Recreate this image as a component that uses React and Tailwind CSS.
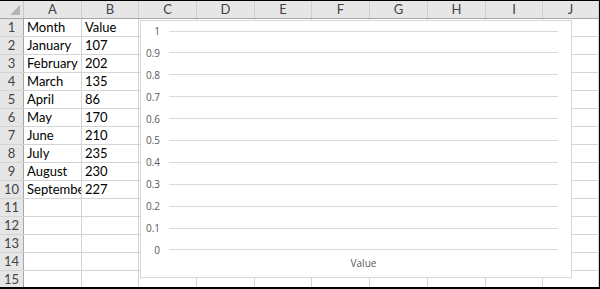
import React from 'react'

const cols = [
  { name: 'A', w: 'w-[58px]' },
  { name: 'B', w: 'w-[57px]' },
  { name: 'C', w: 'w-[58px]' },
  { name: 'D', w: 'w-[58px]' },
  { name: 'E', w: 'w-[57px]' },
  { name: 'F', w: 'w-[58px]' },
  { name: 'G', w: 'w-[58px]' },
  { name: 'H', w: 'w-[58px]' },
  { name: 'I', w: 'w-[57px]' },
  { name: 'J', w: 'flex-1' },
]

const data = [
  ['Month', 'Value'],
  ['January', '107'],
  ['February', '202'],
  ['March', '135'],
  ['April', '86'],
  ['May', '170'],
  ['June', '210'],
  ['July', '235'],
  ['August', '230'],
  ['September', '227'],
]

const ticks = ['1', '0.9', '0.8', '0.7', '0.6', '0.5', '0.4', '0.3', '0.2', '0.1', '0']

function Chart() {
  return (
    <div className="absolute left-[140px] top-[19px] w-[432px] h-[258px] bg-white border border-[#d9d9d9] font-['Open_Sans',sans-serif] text-[#595959]">
      <div className="mt-[4px] h-[231px] flex flex-col justify-between pr-[13px]">
        {ticks.map((t) => (
          <div key={t} className="flex items-center h-[12px]">
            <span className="w-[19px] text-right text-[10px] leading-[12px]">{t}</span>
            <div className="ml-[9px] flex-1 h-px bg-[#d9d9d9]" />
          </div>
        ))}
      </div>
      <div className="mt-[1px] pl-[28px] pr-[13px] text-center text-[10px] leading-[12px]">Value</div>
    </div>
  )
}

export default function App() {
  return (
    <div className="relative w-[600px] h-[289px] overflow-hidden bg-white border-t border-r border-b-2 border-black font-['Lato',sans-serif] text-[13px]">
      <div className="flex h-[18px] bg-[#e6e6e6] border-b border-[#a6a6a6] text-[#444]">
        <div className="w-[24px] shrink-0 border-r border-[#c6c6c6] relative">
          <svg className="absolute right-[3px] bottom-[3px]" width="10" height="10" viewBox="0 0 10 10">
            <polygon points="10,0 10,10 0,10" fill="#b4b4b4" />
          </svg>
        </div>
        {cols.map((c) => (
          <div key={c.name} className={`${c.w} shrink-0 border-r border-[#cfcfcf] flex items-center justify-center leading-none`}>
            {c.name}
          </div>
        ))}
      </div>
      {Array.from({ length: 15 }, (_, r) => (
        <div key={r} className="flex h-[18px] border-b border-[#d4d4d4]">
          <div className="w-[24px] shrink-0 bg-[#e6e6e6] border-r border-[#a6a6a6] flex items-center justify-center text-[#444] leading-none">
            {r + 1}
          </div>
          {cols.map((c, i) => (
            <div key={c.name} className={`${c.w} shrink-0 border-r border-[#d4d4d4] flex items-center pl-[3px] leading-none text-black overflow-hidden whitespace-nowrap`}>
              {data[r] && i < 2 ? data[r][i] : ''}
            </div>
          ))}
        </div>
      ))}
      <Chart />
    </div>
  )
}
